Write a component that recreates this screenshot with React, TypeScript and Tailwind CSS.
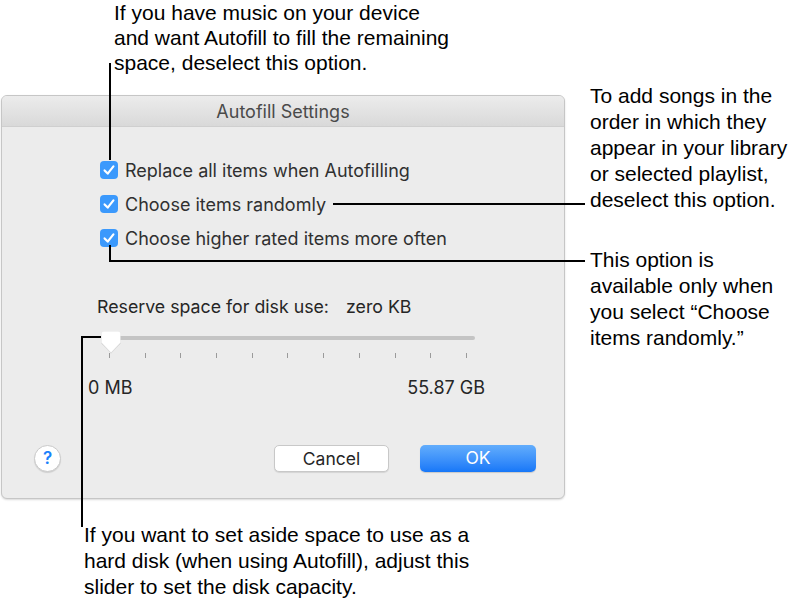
import React from "react";

const note = "font-['Liberation_Sans',Arial,sans-serif] text-[21px] text-black";
const ui = "font-['Inter','Noto_Sans',sans-serif]";

function Checkbox() {
  return (
    <span className="flex h-[18px] w-[18px] items-center justify-center rounded-[4px] bg-[#3b99fc]">
      <svg width="18" height="18" viewBox="0 0 18 18">
        <path d="M4.6 9.4 L7.7 12.6 L13.4 5.4" fill="none" stroke="white" strokeWidth="2.2" strokeLinecap="round" strokeLinejoin="round" />
      </svg>
    </span>
  );
}

function Slider() {
  const ticks = Array.from({ length: 11 });
  return (
    <div className="relative ml-[86px] h-[30px] w-[397px]">
      <div className="absolute left-[14px] top-[7px] h-[4px] w-[373px] rounded-full bg-[#c4c4c4]" />
      <div className="absolute left-[21px] top-[24px] flex w-[358px] justify-between">
        {ticks.map((_, i) => (
          <span key={i} className="h-[5px] w-px bg-[#9a9a9a]" />
        ))}
      </div>
      <svg className="absolute left-[12px] top-[1px]" width="22" height="25" viewBox="0 0 22 25">
        <defs>
          <filter id="ts" x="-30%" y="-30%" width="160%" height="160%">
            <feDropShadow dx="0" dy="0.5" stdDeviation="0.6" floodColor="#000" floodOpacity="0.3" />
          </filter>
        </defs>
        <path d="M4 1.5 H18 a2.5 2.5 0 0 1 2.5 2.5 V12.5 L11 22.5 L1.5 12.5 V4 a2.5 2.5 0 0 1 2.5-2.5 Z" fill="white" filter="url(#ts)" />
      </svg>
    </div>
  );
}

function Dialog() {
  const options = [
    "Replace all items when Autofilling",
    "Choose items randomly",
    "Choose higher rated items more often",
  ];
  return (
    <div className={`${ui} ml-[1px] flex h-[404px] w-[564px] flex-col overflow-hidden rounded-[6px] border border-[#c6c6c6] bg-[#ececec] shadow-[0_1px_2px_rgba(0,0,0,0.15)]`}>
      <div className="flex h-[31px] shrink-0 items-center justify-center border-b border-[#cfcfcf] bg-gradient-to-b from-[#ececec] to-[#d9d9d9] text-[18px] text-[#4a4a4a]">
        Autofill Settings
      </div>

      <div className="flex flex-col pl-[98px] pt-[26px]">
        {options.map((o) => (
          <div key={o} className="flex h-[34px] items-center gap-[7px]">
            <Checkbox />
            <span className="text-[18px] text-[#303030]">{o}</span>
          </div>
        ))}
      </div>

      <div className="ml-[95px] mt-[42px] flex h-[20px] items-center text-[17.75px] text-[#262626]">
        <span>Reserve space for disk use:</span>
        <span className="ml-[17px]">zero KB</span>
      </div>

      <div className="mt-[12px]">
        <Slider />
      </div>

      <div className="ml-[86px] mt-[18px] flex h-[20px] w-[397px] items-center justify-between text-[18px] text-[#262626]">
        <span>0 MB</span>
        <span>55.87 GB</span>
      </div>

      <div className="mt-[48px] flex h-[27px] items-center pl-[32px] pr-[28px]">
        <button className="flex h-[27px] w-[27px] items-center justify-center rounded-full border border-[#cacaca] bg-white text-[17px] font-semibold text-[#1a82fb] shadow-[0_1px_1px_rgba(0,0,0,0.12)]">
          ?
        </button>
        <div className="ml-auto flex gap-[31px]">
          <button className="h-[27px] w-[115px] rounded-[5px] border border-[#c8c8c8] bg-white text-[17.5px] text-[#262626] shadow-[0_1px_1px_rgba(0,0,0,0.1)]">
            Cancel
          </button>
          <button className="h-[27px] w-[116px] rounded-[5px] bg-gradient-to-b from-[#62adfc] to-[#1677f8] text-[17.5px] text-white shadow-[0_1px_1px_rgba(0,0,0,0.15)]">
            OK
          </button>
        </div>
      </div>
    </div>
  );
}

export default function App() {
  return (
    <div className="relative h-[604px] w-[798px] overflow-hidden bg-white">
      <p className={`${note} h-[95px] pl-[114px] leading-[25px]`}>
        If you have music on your device
        <br />
        and want Autofill to fill the remaining
        <br />
        space, deselect this option.
      </p>

      <div className="flex">
        <Dialog />
        <div className={`${note} ml-[25px] mt-[-12px] leading-[26px]`}>
          <p>
            To add songs in the
            <br />
            order in which they
            <br />
            appear in your library
            <br />
            or selected playlist,
            <br />
            deselect this option.
          </p>
          <p className="mt-[34px]">
            This option is
            <br />
            available only when
            <br />
            you select “Choose
            <br />
            items randomly.”
          </p>
        </div>
      </div>

      <p className={`${note} mt-[23px] pl-[84px] leading-[26px]`}>
        If you want to set aside space to use as a
        <br />
        hard disk (when using Autofill), adjust this
        <br />
        slider to set the disk capacity.
      </p>

      {/* callout lines */}
      <div className="absolute left-[109px] top-[63px] h-[97px] w-[2px] bg-black" />
      <div className="absolute left-[333px] top-[203px] h-[2px] w-[252px] bg-black" />
      <div className="absolute left-[109px] top-[245px] h-[17px] w-[2px] bg-black" />
      <div className="absolute left-[109px] top-[260px] h-[2px] w-[476px] bg-black" />
      <div className="absolute left-[81px] top-[336px] h-[2px] w-[20px] bg-black" />
      <div className="absolute left-[81px] top-[336px] h-[191px] w-[2px] bg-black" />
    </div>
  );
}
